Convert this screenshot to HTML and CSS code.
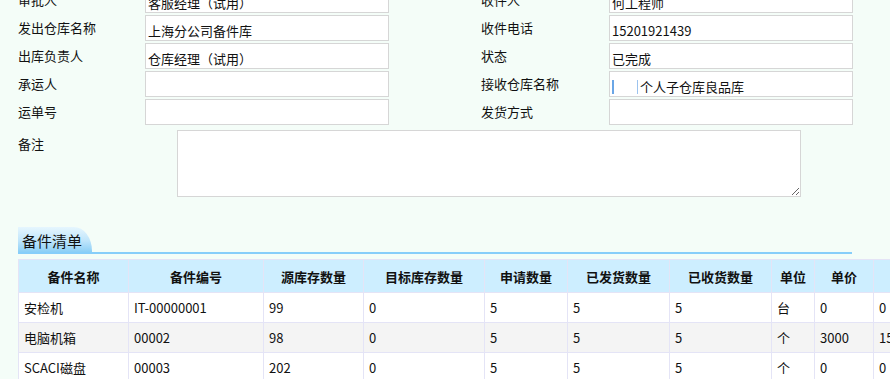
FILE: index.html
```html
<!DOCTYPE html>
<html lang="zh-CN">
<head>
    <meta charset="UTF-8">
    <title>出库单详情</title>
    <link rel="stylesheet" href="styles.css">
</head>
<body>
    <div class="page">
        <div class="form-grid">
            <div class="label">审批人</div>
            <div class="field">客服经理（试用）</div>
            <div class="label right">收件人</div>
            <div class="field">何工程师</div>

            <div class="label">发出仓库名称</div>
            <div class="field">上海分公司备件库</div>
            <div class="label right">收件电话</div>
            <div class="field">15201921439</div>

            <div class="label">出库负责人</div>
            <div class="field">仓库经理（试用）</div>
            <div class="label right">状态</div>
            <div class="field">已完成</div>

            <div class="label">承运人</div>
            <div class="field"></div>
            <div class="label right">接收仓库名称</div>
            <div class="field"><span class="masked"></span>个人子仓库良品库</div>

            <div class="label">运单号</div>
            <div class="field"></div>
            <div class="label right">发货方式</div>
            <div class="field"></div>
        </div>

        <div class="remark-row">
            <div class="remark-label">备注</div>
            <textarea class="remark"></textarea>
        </div>

        <div class="tab-bar">
            <div class="tab">备件清单</div>
        </div>

        <table class="parts">
            <thead>
                <tr>
                    <th class="c-name">备件名称</th>
                    <th class="c-code">备件编号</th>
                    <th class="c-src">源库存数量</th>
                    <th class="c-dst">目标库存数量</th>
                    <th class="c-req">申请数量</th>
                    <th class="c-sent">已发货数量</th>
                    <th class="c-recv">已收货数量</th>
                    <th class="c-unit">单位</th>
                    <th class="c-price">单价</th>
                    <th class="c-total">金额</th>
                </tr>
            </thead>
            <tbody>
                <tr>
                    <td>安检机</td>
                    <td>IT-00000001</td>
                    <td>99</td>
                    <td>0</td>
                    <td>5</td>
                    <td>5</td>
                    <td>5</td>
                    <td>台</td>
                    <td>0</td>
                    <td>0</td>
                </tr>
                <tr>
                    <td>电脑机箱</td>
                    <td>00002</td>
                    <td>98</td>
                    <td>0</td>
                    <td>5</td>
                    <td>5</td>
                    <td>5</td>
                    <td>个</td>
                    <td>3000</td>
                    <td>15000</td>
                </tr>
                <tr>
                    <td>SCACI磁盘</td>
                    <td>00003</td>
                    <td>202</td>
                    <td>0</td>
                    <td>5</td>
                    <td>5</td>
                    <td>5</td>
                    <td>个</td>
                    <td>0</td>
                    <td>0</td>
                </tr>
            </tbody>
        </table>
    </div>
</body>
</html>
```

FILE: styles.css
```css
:root {
    --page-bg: #f4fdf8;
    --field-border: #d6d6d6;
    --grid-line: #e4e4f6;
    --head-bg: #cdeeff;
    --tab-line: #87cefa;
    --text: #111;
}

* {
    box-sizing: border-box;
}

html, body {
    margin: 0;
    padding: 0;
    overflow: hidden;
}

body {
    background-color: var(--page-bg);
    font-family: "Noto Sans CJK SC", "Liberation Sans", sans-serif;
    font-size: 13px;
    color: var(--text);
}

.page {
    padding-left: 18px;
    width: 1100px;
}

/* form area (scrolled, first row partly hidden) */
.form-grid {
    display: grid;
    grid-template-columns: 127px 244px 220px 244px;
    row-gap: 2px;
    margin-top: -13px;
}

.label {
    height: 26px;
    line-height: 26px;
}

.label.right {
    padding-left: 92px;
}

.field {
    height: 26px;
    line-height: 25px;
    padding: 2px 2px 0;
    background: #fff;
    border: 1px solid var(--field-border);
    white-space: nowrap;
    overflow: hidden;
}

.masked {
    display: inline-block;
    width: 26px;
    height: 14px;
    margin-right: 2px;
    vertical-align: -2px;
    background: #fff;
    border-left: 2px solid #6aa6e6;
    border-right: 1px solid #9cc3ee;
}

.remark-row {
    display: flex;
    margin-top: 5px;
}

.remark-label {
    width: 159px;
    padding-top: 4px;
}

.remark {
    width: 624px;
    height: 67px;
    margin: 0;
    border: 1px solid var(--field-border);
    background: #fff;
    font-family: inherit;
    font-size: 13px;
    resize: both;
}

/* section tab */
.tab-bar {
    width: 834px;
    margin-top: 30px;
    border-bottom: 2px solid var(--tab-line);
}

.tab {
    width: 74px;
    height: 25px;
    line-height: 27px;
    padding-left: 4px;
    font-size: 15px;
    color: #111;
    border-top-right-radius: 18px 24px;
    background: linear-gradient(to bottom, #e6f6fe 0%, #bfe5fb 55%, #8ccff6 100%);
}

/* parts table */
.parts {
    margin-top: 5px;
    border-collapse: collapse;
    table-layout: fixed;
}

.parts th,
.parts td {
    border: 1px solid var(--grid-line);
    padding: 0 5px;
    text-align: left;
    white-space: nowrap;
    overflow: hidden;
}

.parts th {
    height: 33px;
    background: var(--head-bg);
    font-weight: bold;
    text-align: center;
}

.parts td {
    height: 30px;
    background: #fff;
}

.parts tbody tr:nth-child(even) td {
    background: #f4f4f4;
}

.c-name { width: 110px; }
.c-code { width: 135px; }
.c-src { width: 100px; }
.c-dst { width: 121px; }
.c-req { width: 83px; }
.c-sent { width: 102px; }
.c-recv { width: 102px; }
.c-unit { width: 43px; }
.c-price { width: 59px; }
.c-total { width: 110px; }
```
